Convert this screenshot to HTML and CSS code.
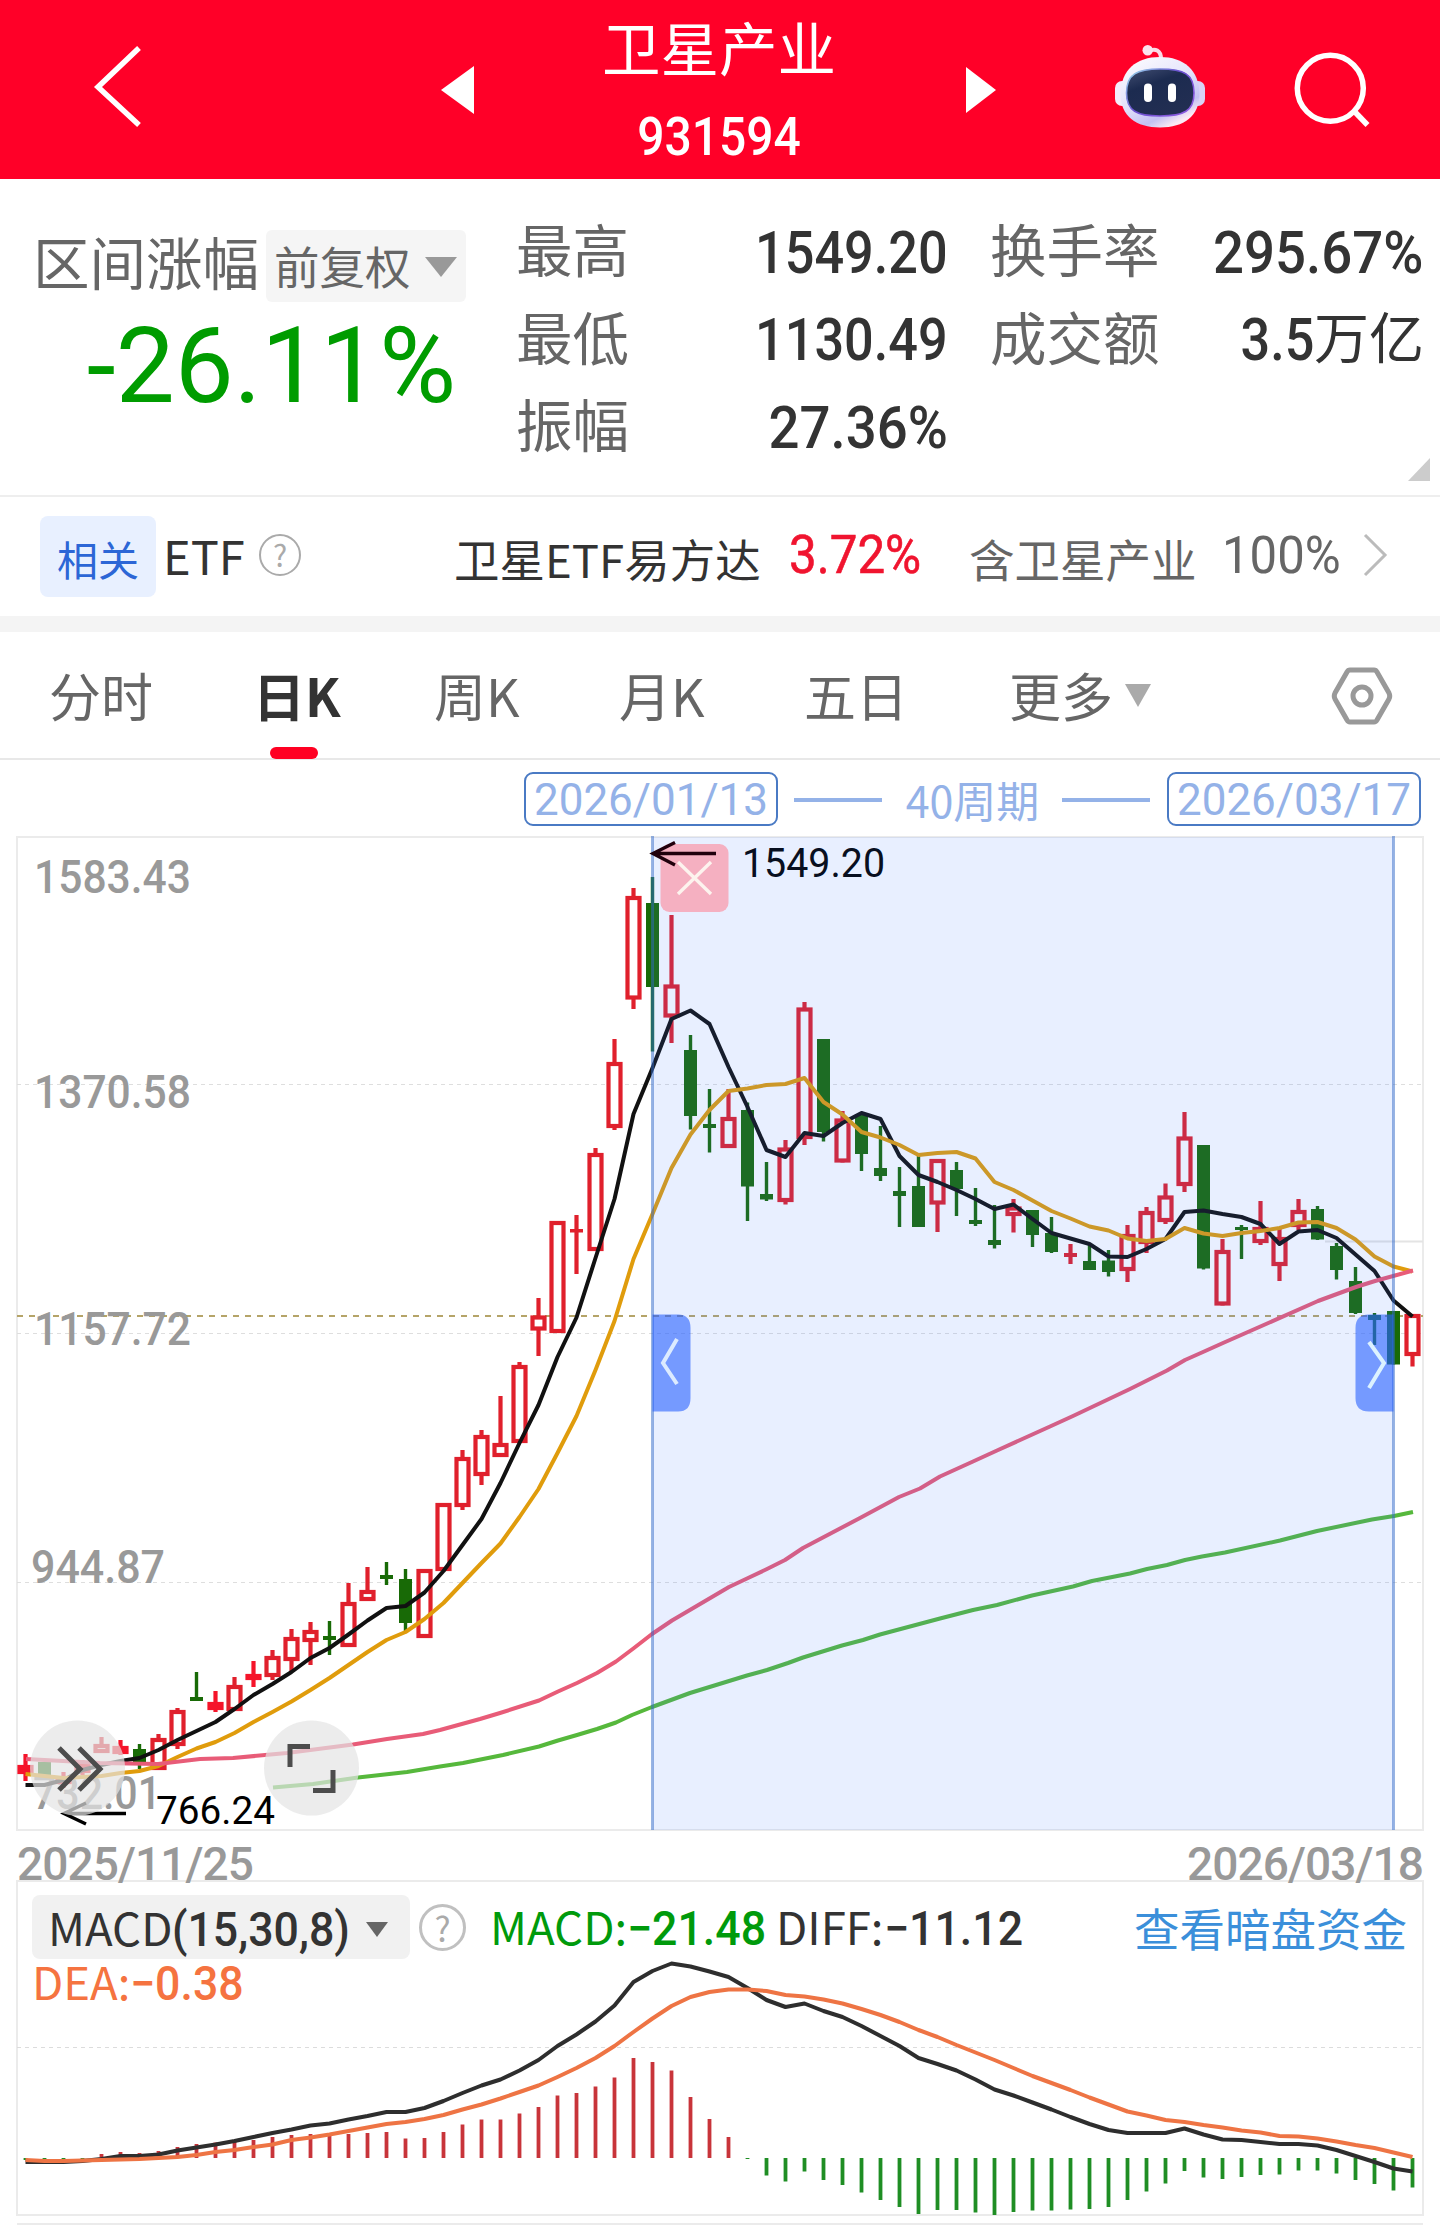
FILE: index.html
```html
<!DOCTYPE html>
<html lang="zh-CN">
<head>
  <meta charset="UTF-8" />
  <meta name="viewport" content="width=device-width, initial-scale=1.0"/>
  <title>卫星产业 931594</title>
  <link rel="stylesheet" href="styles.css">
</head>
<body>

  <header class="header">
    <svg class="back" width="60" height="90" viewBox="0 0 60 90"><path d="M49 6 L8 45 L49 83"/></svg>
    <svg class="prev" width="34" height="48" viewBox="0 0 34 48"><path d="M0 24 L33 0 V48 Z"/></svg>
    <div class="title">
      <div class="name">卫星产业</div>
      <div class="code">931594</div>
    </div>
    <svg class="next" width="32" height="48" viewBox="0 0 32 48"><path d="M0 1 L30 24 L0 47 Z"/></svg>
    <svg class="robot" width="92" height="86" viewBox="1114 44 92 86">
      <defs>
        <linearGradient id="shell" x1="0" y1="0" x2="0.6" y2="1">
          <stop offset="0" stop-color="#ffffff"/>
          <stop offset="0.55" stop-color="#e4e3fb"/>
          <stop offset="0.85" stop-color="#c3c0f2"/>
          <stop offset="1" stop-color="#fbeaf4"/>
        </linearGradient>
        <linearGradient id="glow" x1="0" y1="0" x2="1" y2="0.8">
          <stop offset="0" stop-color="#9fe3ee"/>
          <stop offset="0.5" stop-color="#6a4fd0"/>
          <stop offset="1" stop-color="#8d5be0"/>
        </linearGradient>
        <linearGradient id="screen" x1="0" y1="0" x2="0.5" y2="1">
          <stop offset="0" stop-color="#434f73"/>
          <stop offset="0.4" stop-color="#1c2b50"/>
          <stop offset="1" stop-color="#222e52"/>
        </linearGradient>
      </defs>
      <path d="M1149 51 C1155 48 1161 50 1161 59" fill="none" stroke="#fbd9e6" stroke-width="4"/>
      <circle cx="1147.7" cy="50.3" r="5.2" fill="#fbe3ee"/>
      <rect x="1115" y="81" width="16" height="25" rx="7" fill="#f4ecfb"/>
      <rect x="1189" y="81" width="16" height="25" rx="7" fill="#d9d2f6"/>
      <path d="M1160 57 C1184 57 1199 70 1199.500 94 C1199.500 116 1184 127.500 1160 127.500 C1136 127.500 1120.500 116 1120.500 94 C1121 70 1136 57 1160 57 Z" fill="url(#shell)"/>
      <path d="M1160 69 C1184 69 1194 74 1194 93 C1194 111 1184 116 1160 116 C1137 116 1126.500 111 1126.500 93 C1126.500 74 1137 69 1160 69 Z" fill="url(#screen)" stroke="url(#glow)" stroke-width="1.600"/>
      <rect x="1144" y="83.500" width="8" height="18.500" rx="4" fill="#fff"/>
      <rect x="1168" y="83.500" width="8" height="18.500" rx="4" fill="#fff"/>
    </svg>
    <svg class="search" width="80" height="80" viewBox="1292 49 80 80">
      <circle cx="1330.300" cy="88.300" r="33"/>
      <path d="M1354 111 L1367.500 125"/>
    </svg>
  </header>

  <section class="stats">
    <div class="range">
      <div class="range-head">
        <span class="label">区间涨幅</span>
        <span class="select">前复权<i class="caret"></i></span>
      </div>
      <div class="change">-26.11%</div>
    </div>
    <div class="col col-a">
      <div class="row"><span class="label">最高</span><b class="num">1549.20</b></div>
      <div class="row"><span class="label">最低</span><b class="num">1130.49</b></div>
      <div class="row"><span class="label">振幅</span><b class="num pct">27.36%</b></div>
    </div>
    <div class="col col-b">
      <div class="row"><span class="label">换手率</span><b class="num pct">295.67%</b></div>
      <div class="row"><span class="label">成交额</span><span class="amount"><b class="num">3.5</b><span class="unit">万亿</span></span></div>
    </div>
    <i class="corner"></i>
  </section>

  <section class="etf">
    <span class="badge">相关</span>
    <span class="etf-word">ETF</span>
    <span class="help">?</span>
    <span class="etf-name">卫星ETF易方达</span>
    <b class="etf-rate">3.72%</b>
    <span class="etf-hold">含卫星产业</span>
    <span class="etf-pct">100%</span>
    <svg class="more" width="28" height="46" viewBox="0 0 28 46"><path d="M3 3 L23 23 L3 43"/></svg>
  </section>

  <nav class="tabs">
    <span class="tab t1">分时</span>
    <span class="tab t2 active">日K</span>
    <span class="tab t3">周K</span>
    <span class="tab t4">月K</span>
    <span class="tab t5">五日</span>
    <span class="tab t6">更多<i class="caret"></i></span>
    <svg class="setting" width="64" height="62" viewBox="0 0 64 62">
      <path d="M20 5 H44 Q46 5 47 7 L59 28 Q60.500 31 59 34 L47 55 Q46 57 44 57 H20 Q18 57 17 55 L5 34 Q3.500 31 5 28 L17 7 Q18 5 20 5 Z"/>
      <circle cx="32" cy="31" r="9"/>
    </svg>
  </nav>

  <div class="period">
    <span class="date">2026/01/13</span>
    <i class="dash"></i>
    <span class="days">40周期</span>
    <i class="dash"></i>
    <span class="date">2026/03/17</span>
  </div>

  <svg id="kline" class="kline" width="1440" height="996" viewBox="0 836 1440 996"></svg>

  <div class="axis">
    <span>2025/11/25</span>
    <span>2026/03/18</span>
  </div>

  <section class="macd">
    <svg id="macd" class="macd-chart" width="1440" height="345" viewBox="0 1880 1440 345"></svg>
    <div class="macd-head">
      <span class="macd-select">MACD<b>(15,30,8)</b><i class="caret"></i></span>
      <span class="help">?</span>
      <span class="v-macd">MACD:<b>−21.48</b></span>
      <span class="v-diff">DIFF:<b>−11.12</b></span>
      <span class="link">查看暗盘资金</span>
    </div>
    <div class="v-dea">DEA:<b>−0.38</b></div>
  </section>

  <script src="chart.js"></script>
</body>
</html>
```

FILE: styles.css
```css
* {
  box-sizing: border-box;
}

body {
  margin: 0;
  width: 1440px;
  height: 2225px;
  overflow: hidden;
  background: #fff;
  color: #333;
  font-family: "Noto Sans CJK SC", sans-serif;
}

b {
  font-family: Roboto, "Noto Sans CJK SC", sans-serif;
  font-weight: 500;
}

svg {
  display: block;
  flex: none;
}

/* header */
.header {
  height: 179px;
  background: #ff0028;
  display: flex;
  align-items: flex-start;
  color: #fff;
}

.back {
  margin: 42px 0 0 90px;
  fill: none;
  stroke: #fff;
  stroke-width: 5.5;
}

.prev {
  margin: 66px 0 0 291px;
  fill: #fff;
}

.title {
  width: 330px;
  margin-left: 79px;
  text-align: center;
}

.name {
  font-size: 58.5px;
  line-height: 60px;
  padding-top: 16px;
}

.code {
  font-family: Roboto, sans-serif;
  font-weight: 500;
  font-size: 53px;
  line-height: 60px;
  margin-top: 31px;
  transform: scaleX(0.905);
}

.title,
.prev,
.next {
  flex: none;
}

.next {
  margin: 66px 0 0 82px;
  fill: #fff;
}

.robot {
  margin: 44px 0 0 116px;
}

.search {
  margin: 49px 0 0 86px;
  fill: none;
  stroke: #fff;
  stroke-width: 5.5;
}

/* stats */
.stats {
  position: relative;
  height: 318px;
  border-bottom: 2px solid #eee;
  display: flex;
}

.label {
  position: relative;
  top: -3px;
  font-size: 56.5px;
  color: #666;
  white-space: nowrap;
}

.range {
  width: 516px;
  padding: 51px 0 0 33px;
}

.range-head {
  display: flex;
  align-items: center;
  height: 72px;
  line-height: 72px;
}

.range-head .label {
  top: -6px;
}

.select {
  display: flex;
  align-items: center;
  width: 200px;
  height: 72px;
  margin-left: 7px;
  padding: 0 0 3px 8px;
  border-radius: 6px;
  background: #f5f5f5;
  color: #666;
  font-size: 45.5px;
}

.caret {
  border: 16px solid transparent;
  border-top: 20px solid #999;
  border-bottom: 0;
  margin-left: 14px;
}

.select .caret {
  margin-top: 4px;
}

.change {
  font-family: Roboto, sans-serif;
  font-size: 106px;
  line-height: 128px;
  padding-left: 50px;
  color: #009c00;
  white-space: nowrap;
  transform: scaleX(0.99);
  transform-origin: 418px 0;
}

.col {
  padding-top: 28px;
}

.col-a {
  width: 432px;
}

.col-b {
  width: 434px;
  margin-left: 42px;
}

.row {
  display: flex;
  justify-content: space-between;
  align-items: center;
  height: 87.5px;
  line-height: 87.5px;
}

.num {
  padding-top: 3px;
  font-size: 59px;
  transform: scaleX(0.885);
  transform-origin: right;
}

.pct {
  transform: scaleX(0.925);
}

.amount {
  font-size: 55px;
  display: flex;
}

.unit {
  position: relative;
  top: -2px;
}

.corner {
  position: absolute;
  right: 10px;
  bottom: 14px;
  border-left: 22px solid transparent;
  border-bottom: 23px solid #ccc;
}

/* etf row */
.etf {
  height: 135px;
  border-bottom: 16px solid #f4f4f4;
  display: flex;
  align-items: center;
  font-size: 45.5px;
  line-height: 60px;
  white-space: nowrap;
}

.badge {
  width: 116px;
  height: 81px;
  margin-left: 40px;
  border-radius: 8px;
  background: #e8f0ff;
  color: #2c66d6;
  font-size: 41px;
  line-height: 85px;
  text-align: center;
}

.etf-word {
  margin: -3px 0 0 7px;
  width: 87px;
  font-size: 47px;
}

.help {
  width: 42px;
  height: 42px;
  margin: -3px 0 0 9px;
  border: 2px solid #aaa;
  border-radius: 50%;
  color: #aaa;
  font-size: 30px;
  line-height: 37px;
  text-align: center;
}

.etf-name {
  margin: 3px 0 0 153px;
  width: 309px;
}

.etf-rate {
  margin: -4px 0 0 26px;
  width: 130px;
  color: #f0142f;
  font-size: 53px;
  font-weight: 400;
  -webkit-text-stroke: 0.6px #f0142f;
  transform: scaleX(0.93);
  transform-origin: left;
}

.etf-hold {
  margin: 3px 0 0 50px;
  width: 228px;
  color: #666;
}

.etf-pct {
  margin: -4px 0 0 25px;
  width: 116px;
  color: #666;
  font-family: Roboto, sans-serif;
  font-size: 52.5px;
  transform: scaleX(0.935);
  transform-origin: left;
}

.more {
  margin: -4px 0 0 24px;
  fill: none;
  stroke: #bbb;
  stroke-width: 3;
}

/* tabs */
.tabs {
  height: 128px;
  border-bottom: 2px solid #e8e8e8;
  display: flex;
  align-items: flex-start;
  color: #666;
  font-size: 52px;
  line-height: 126px;
  white-space: nowrap;
}

.tab {
  position: relative;
  height: 126px;
}

.t1 { margin-left: 49px; width: 204px; }
.t2 { width: 181px; }
.t3 { width: 185px; }
.t4 { width: 185px; }
.t5 { width: 205px; }
.t6 { width: 321px; }

.active {
  color: #333;
  font-weight: 700;
}

.active::after {
  content: "";
  position: absolute;
  left: 17px;
  bottom: -1px;
  width: 48px;
  height: 12px;
  border-radius: 6px;
  background: #ff0022;
}

.t6 .caret {
  display: inline-block;
  margin-left: 12px;
  border-width: 23px 13px 0;
  border-top-color: #aaa;
  vertical-align: 10px;
}

.setting {
  margin-top: 33px;
  fill: none;
  stroke: #999;
  stroke-width: 5;
}

/* selected period */
.period {
  height: 76px;
  padding: 4px 19px 0 0;
  display: flex;
  justify-content: flex-end;
  align-items: center;
  color: #94b2e8;
  font-size: 43px;
}

.date {
  width: 254px;
  height: 54px;
  margin-top: -2px;
  border: 2px solid #4a7ac4;
  border-radius: 9px;
  font-family: Roboto, sans-serif;
  font-size: 44px;
  line-height: 52px;
  text-align: center;
}

.dash {
  width: 88px;
  height: 4px;
  margin: 0 17px 0 16px;
  background: #94b2e8;
}

.days {
  width: 147px;
  margin-top: -3px;
  line-height: 50px;
  text-align: center;
}

/* charts */
.kline text {
  font-family: Roboto, sans-serif;
}

.axis {
  height: 48px;
  padding: 6px 17px 0 17px;
  display: flex;
  justify-content: space-between;
  color: #999;
  font-family: Roboto, sans-serif;
  font-weight: 500;
  font-size: 46px;
  line-height: 53px;
  letter-spacing: -0.9px;
}

.axis span {
  position: relative;
  z-index: 1;
}

.macd {
  position: relative;
  height: 345px;
  padding: 15px 33px 0 32px;
}

.macd-chart {
  position: absolute;
  left: 0;
  top: 0;
}

.macd-head {
  position: relative;
  display: flex;
  align-items: center;
  height: 64px;
  font-size: 45.5px;
  line-height: 62px;
  white-space: nowrap;
}

.macd b {
  display: inline-block;
  font-size: 48px;
  transform: scaleX(0.93);
  transform-origin: left;
}

.macd-select {
  width: 378px;
  height: 64px;
  padding-left: 16px;
  border-radius: 8px;
  background: #f1f1f1;
}

.macd-select .caret {
  display: inline-block;
  border-width: 15px 11px 0;
  border-top-color: #666;
  margin-left: 2px;
  vertical-align: 9px;
}

.macd-head .help {
  width: 47px;
  height: 47px;
  margin: 0 0 0 9px;
  border-width: 3px;
  border-color: #c0c0c0;
  font-size: 34px;
  line-height: 41px;
}

.v-macd {
  margin-left: 24px;
  width: 286px;
  color: #009a0c;
}

.v-diff {
  width: 240px;
}

.link {
  margin-left: auto;
  color: #3b8fda;
}

.v-dea {
  position: relative;
  font-size: 45.5px;
  line-height: 42px;
  color: #f57340;
}
```

FILE: chart.js
```javascript
const STEP = 19;
const X0 = 25.5;
const xAt = i => X0 + STEP * i;

// r = hollow red, f = filled red, d = red doji, g = green : [type, high, top, bottom, low]
const candles = [
  ['f', 1754, 1765, 1774, 1781], ['g', 1762, 1762, 1775, 1775], ['f', 1772, 1778, 1784, 1788], ['f', 1760, 1763, 1773, 1775],
  ['r', 1737, 1744, 1753, 1753], ['f', 1740, 1746, 1754, 1755], ['g', 1744, 1749, 1762, 1769], ['r', 1734, 1738, 1770, 1770],
  ['r', 1708, 1710, 1746, 1749], ['g', 1672, 1697, 1701, 1701], ['f', 1691, 1702, 1710, 1712], ['r', 1677, 1685, 1711, 1711],
  ['f', 1661, 1674, 1680, 1687], ['r', 1650, 1656, 1677, 1680], ['r', 1629, 1637, 1661, 1672], ['r', 1622, 1630, 1642, 1665],
  ['g', 1621, 1636, 1640, 1655], ['r', 1583, 1602, 1647, 1647], ['r', 1567, 1590, 1601, 1601], ['g', 1562, 1575, 1579, 1585],
  ['g', 1569, 1579, 1623, 1631], ['r', 1569, 1569, 1638, 1638], ['r', 1503, 1503, 1571, 1571], ['r', 1450, 1457, 1507, 1510],
  ['r', 1430, 1435, 1476, 1485], ['r', 1396, 1443, 1457, 1457], ['r', 1362, 1365, 1443, 1443], ['r', 1298, 1315.5, 1330.5, 1356],
  ['r', 1221, 1221, 1333, 1333], ['d', 1215, 1229, 1232.5, 1274], ['r', 1148, 1153, 1251, 1251], ['r', 1039, 1062, 1128, 1130],
  ['r', 888, 896, 999.5, 1009], ['g', 877, 903, 987, 1051.5], ['r', 915, 984.5, 1017.5, 1043], ['g', 1035, 1050, 1116, 1129.5],
  ['g', 1089, 1124, 1128, 1152.5], ['r', 1089, 1117, 1148, 1148], ['g', 1102.5, 1110, 1186.5, 1221], ['g', 1162, 1194, 1199.5, 1201],
  ['r', 1140, 1147.5, 1202, 1204.5], ['r', 1002, 1007.5, 1139, 1145], ['g', 1039, 1039, 1132, 1141.5], ['r', 1111, 1118.5, 1162.5, 1162.5],
  ['g', 1114.5, 1114.5, 1154, 1171], ['g', 1126, 1168, 1176, 1181], ['g', 1167, 1191, 1196, 1227], ['g', 1154, 1186, 1227, 1227],
  ['r', 1159, 1159, 1204.5, 1232], ['g', 1162, 1170, 1189, 1216], ['g', 1188, 1220, 1224, 1226], ['g', 1205, 1240, 1245, 1248.5],
  ['r', 1199, 1206.5, 1216, 1232.5], ['g', 1210, 1210, 1235, 1247], ['g', 1217, 1233, 1252, 1253], ['d', 1244, 1253, 1257, 1264],
  ['g', 1245, 1261, 1270, 1270], ['g', 1250, 1260.5, 1272, 1276.5], ['r', 1225, 1234, 1271, 1282], ['r', 1207, 1211, 1244, 1253],
  ['r', 1183.5, 1195.5, 1222, 1224], ['r', 1112, 1136.5, 1186, 1192], ['g', 1145, 1145, 1268.5, 1269.5], ['r', 1239, 1250, 1305.5, 1305.5],
  ['g', 1225, 1227, 1230, 1259], ['r', 1201, 1227, 1243, 1245], ['r', 1228, 1237, 1266, 1281], ['r', 1199, 1210, 1227, 1230],
  ['g', 1206, 1209, 1239.5, 1240], ['g', 1243, 1246, 1270, 1279.5], ['g', 1267, 1281, 1313, 1314], ['g', 1313, 1315, 1320, 1345],
  ['g', 1311, 1311, 1364.5, 1364.5], ['r', 1314, 1314, 1356, 1366.5]
];

const maShort = [
  1785, 1785, 1780, 1770, 1765, 1761, 1758, 1750, 1740, 1731, 1722, 1709, 1695, 1684, 1672, 1658, 1648, 1634.5, 1620.5,
  1608, 1606, 1592.5, 1571, 1545, 1519, 1483, 1443, 1405, 1357, 1317.5, 1258, 1199, 1114, 1068, 1019, 1010.5, 1024, 1067,
  1107, 1150, 1157, 1133, 1136, 1123, 1113, 1119, 1156, 1175, 1182, 1190, 1199, 1209, 1204.5, 1219, 1233, 1238.5, 1244,
  1256.5, 1257, 1249, 1239, 1212, 1210.5, 1214, 1217, 1224, 1244, 1231.5, 1230, 1238, 1254.5, 1271, 1300.5, 1316.5
];

const maMid = [
  1774, 1776, 1778, 1777, 1776, 1773, 1771, 1766, 1757, 1748.5, 1742, 1733, 1722, 1712, 1701.5, 1690, 1678, 1665, 1652,
  1640, 1632, 1619, 1603, 1583, 1563, 1543.5, 1517, 1489, 1453, 1416, 1370, 1321, 1259, 1214, 1168, 1134.5, 1110, 1091,
  1088.5, 1085, 1084, 1078, 1102, 1114.5, 1132, 1137.5, 1145, 1155, 1153, 1152, 1158.5, 1182, 1190, 1200.5, 1211, 1218.5,
  1226.5, 1230.5, 1238.5, 1241, 1239, 1228, 1233.5, 1236, 1233, 1231, 1228, 1222.5, 1222, 1228, 1239.5, 1256.5, 1266.5, 1271.5
];

const maLong = '26,1759 100,1763 158,1764 200,1759 233,1758 287,1753 353,1744.5 387,1739 423,1734 440,1730 480,1719 500,1713 539,1700.5 558,1691.5 577,1683 597,1673 616,1661.5 634,1648 652,1634 672,1620.5 729,1587 747,1578.5 767,1569 785,1560 803,1548 860,1518 899,1497 920,1488.5 940,1476.5 973,1461.5 997,1450.5 1050,1426.5 1073,1416 1130,1389 1167,1370.5 1185,1360 1203,1352 1223,1343 1318,1301 1356,1287 1375,1281 1413,1270.5';
const maYear = '273,1787.5 313,1784 358,1777.5 407,1772 440,1766.5 463,1763 503,1755 539,1746.5 558,1740.5 577,1735 597,1729 616,1722.5 632,1715 652,1707 690,1693 747,1675.5 767,1670 788,1663 803,1657.5 842,1645.5 863,1640 880,1634.5 940,1618.5 973,1610 997,1605 1032,1595.5 1073,1586.5 1092,1581 1130,1573.5 1147,1569 1167,1565 1185,1560 1202,1556.5 1225,1552.5 1280,1540.5 1317,1531 1372,1519.5 1394,1516 1413,1512';

const ZERO = 2158;
const bars = [
  2160, 2160, 2160, 2159.5, 2154, 2152, 2153, 2151, 2147, 2144, 2142.5, 2141.5, 2140, 2137, 2135, 2134, 2135.5, 2134, 2133,
  2132, 2138.5, 2138, 2132, 2124.5, 2119.5, 2119.5, 2113.5, 2107, 2095.5, 2093, 2086.5, 2077.5, 2058, 2062, 2070.5, 2097,
  2119, 2137, 2159, 2175.5, 2181.5, 2171.5, 2180, 2185, 2192.5, 2200, 2207, 2214, 2210, 2210, 2212.5, 2215, 2212, 2210.5,
  2210.5, 2209.5, 2209, 2207, 2200, 2191.5, 2183.5, 2171, 2177.5, 2179, 2177, 2175, 2174.5, 2170.5, 2170.5, 2173.5, 2180,
  2184, 2190.5, 2187.5
];

const diff = [
  2162, 2162, 2162, 2161, 2159, 2156, 2156, 2154.5, 2150.5, 2147.5, 2144.5, 2141, 2137, 2133, 2129.5, 2125.5, 2123.5,
  2119.5, 2116, 2112, 2112, 2108, 2101, 2093, 2085.5, 2079.5, 2070.5, 2060, 2046, 2034.5, 2021.5, 2005.5, 1982, 1971,
  1963.5, 1966.5, 1971.5, 1977, 1988, 2000, 2007, 2003.5, 2011, 2017, 2026, 2036, 2046, 2058, 2064, 2070.5, 2079.5, 2089.5,
  2095.5, 2102.5, 2109.5, 2117, 2124, 2130, 2133, 2133, 2133, 2128.5, 2134.5, 2139.5, 2140, 2142, 2144, 2144, 2145.5, 2150,
  2156, 2162, 2168.5, 2171.5
];

const dea = [
  2160, 2161, 2161, 2160.5, 2160, 2159.5, 2159, 2158, 2157, 2155, 2152, 2150, 2147, 2144.5, 2140, 2137.5, 2134.5, 2131,
  2127.5, 2124, 2122, 2119, 2115, 2109.5, 2104.5, 2098.5, 2092, 2085.5, 2077, 2068, 2058, 2046, 2032, 2018.5, 2006, 1997,
  1992, 1989.5, 1989.5, 1991, 1995, 1996.5, 1999.5, 2003.5, 2009, 2015, 2022, 2030, 2037, 2045, 2052.5, 2060, 2068, 2076,
  2083, 2090, 2097.5, 2104.5, 2111.5, 2115.5, 2120, 2122, 2125, 2127.5, 2130.5, 2132.5, 2136, 2136.5, 2138.5, 2141.5, 2145,
  2148, 2152.5, 2157
];

const toPoints = list => list.map((y, i) => `${xAt(i)},${y}`).join(' ');
const polyline = (points, color, w = 4) =>
  `<polyline points="${points}" fill="none" stroke="${color}" stroke-width="${w}" stroke-linejoin="round"/>`;
const line = (x1, y1, x2, y2, color, w = 2, dash = '') =>
  `<line x1="${x1}" y1="${y1}" x2="${x2}" y2="${y2}" stroke="${color}" stroke-width="${w}" stroke-dasharray="${dash}"/>`;
const stroke = (d, color, w) => `<path d="${d}" fill="none" stroke="${color}" stroke-width="${w}"/>`;
const text = (str, x, y, size, width, color, weight = 400) =>
  `<text x="${x}" y="${y}" font-size="${size}" font-weight="${weight}" fill="${color}" textLength="${width}" lengthAdjust="spacingAndGlyphs">${str}</text>`;

function drawCandle([type, high, top, bottom, low], i) {
  const x = xAt(i);
  if (type === 'g' || type === 'd') {
    const color = type === 'g' ? '#186a06' : '#e0202c';
    return line(x, high, x, low, color, type === 'g' ? 3.4 : 4.2) +
      `<rect x="${x - 6.5}" y="${top}" width="13" height="${bottom - top}" fill="${color}"/>`;
  }
  const color = type === 'f' ? '#f5142a' : '#e0202c';
  return line(x, high, x, top + 1, color, 4.2) + line(x, bottom - 1, x, low, color, 4.2) +
    `<rect x="${x - 6}" y="${top + 2}" width="12" height="${Math.max(bottom - top - 4, 2)}"
      fill="${type === 'f' ? color : '#fff'}" stroke="${color}" stroke-width="4.2"/>`;
}

function drawKline() {
  let s = '';
  // frame and grid
  s += '<rect x="17" y="837" width="1406" height="993" fill="none" stroke="#ebebeb" stroke-width="2"/>';
  s += [1084.5, 1333.5, 1582.5].map(y => line(17, y, 1423, y, '#dedede', 1.2, '4 4')).join('');
  s += line(1325, 1241.5, 1423, 1241.5, '#e4e4e4', 2);
  s += line(17, 1316, 1423, 1316, '#b5a468', 1.8, '6 6');
  // price labels
  s += text('1583.43', 34, 893, 47, 157, '#999', 500);
  s += text('1370.58', 34, 1108, 47, 157, '#999', 500);
  s += text('1157.72', 34, 1345, 47, 157, '#999', 500);
  s += text('944.87', 31, 1583, 47, 134, '#999', 500);
  s += text('732.01', 33, 1809, 47, 128, '#999', 500);
  // candles and averages
  s += candles.map(drawCandle).join('');
  s += polyline(toPoints(maShort), '#111');
  s += polyline(toPoints(maMid), '#e09c0c');
  s += polyline(maLong, '#e85c78');
  s += polyline(maYear, '#56b83c');
  // high and low marks
  s += text('1549.20', 742, 877, 40, 143, '#000');
  s += text('766.24', 156, 1824, 39, 119, '#000');
  s += stroke('M126 1813.500 H64 M86 1803 L64 1813.500 L86 1824', '#000', 3.4);
  // selected range
  s += '<rect x="652.500" y="837" width="741" height="993" fill="rgb(65,125,255)" fill-opacity="0.12"/>';
  s += line(652.5, 836, 652.5, 1830, 'rgba(50,105,200,0.5)', 3);
  s += line(1393.5, 836, 1393.5, 1830, 'rgba(50,105,200,0.5)', 3);
  s += '<rect x="660.500" y="844" width="68" height="68" rx="9" fill="#f5b0c1"/>';
  s += stroke('M678 862 L711 894 M711 862 L678 894', '#fdf3ee', 3.4);
  s += stroke('M716 853.500 H653 M675 842.500 L653 853.500 L675 865', '#20000c', 3.4);
  s += '<path d="M652.500 1314.500 H678 Q690.500 1314.500 690.500 1328 V1398 Q690.500 1411.500 678 1411.500 H652.500 Z" fill="rgb(40,97,255)" fill-opacity="0.6"/>';
  s += '<path d="M1393.500 1314.500 H1369 Q1355.500 1314.500 1355.500 1328 V1398 Q1355.500 1411.500 1369 1411.500 H1393.500 Z" fill="rgb(40,97,255)" fill-opacity="0.6"/>';
  s += stroke('M677 1339 L663 1363 L677 1384', '#dcebff', 4);
  s += stroke('M1369 1342 L1384 1363 L1369 1388', '#dcf2ff', 4);
  // round buttons
  s += '<circle cx="77.500" cy="1768" r="47.500" fill="#e4e4e4" fill-opacity="0.7"/>';
  s += '<circle cx="311.500" cy="1768" r="47.500" fill="#e4e4e4" fill-opacity="0.7"/>';
  s += stroke('M59 1748 L80 1769 L59 1790 M79 1748 L100 1769 L79 1790', '#4c4c4c', 5);
  s += stroke('M290 1767 V1746.500 H310 M333 1770 V1790.500 H313', '#4c4c4c', 5);
  document.getElementById('kline').innerHTML = s;
}

function drawMacd() {
  let s = '<rect x="17" y="1881" width="1406" height="334" fill="none" stroke="#ebebeb" stroke-width="2"/>';
  s += line(17, 2224, 1423, 2224, '#ebebeb', 2);
  s += line(17, 2047.5, 1423, 2047.5, '#dcdcdc', 1.2, '4 4');
  s += bars.map((y, i) => line(xAt(i), ZERO, xAt(i), y, y < ZERO ? '#c8343a' : '#1f8e24', 3.8)).join('');
  s += polyline(toPoints(diff), '#2e2e2e');
  s += polyline(toPoints(dea), '#ee7444');
  document.getElementById('macd').innerHTML = s;
}

drawKline();
drawMacd();
```
